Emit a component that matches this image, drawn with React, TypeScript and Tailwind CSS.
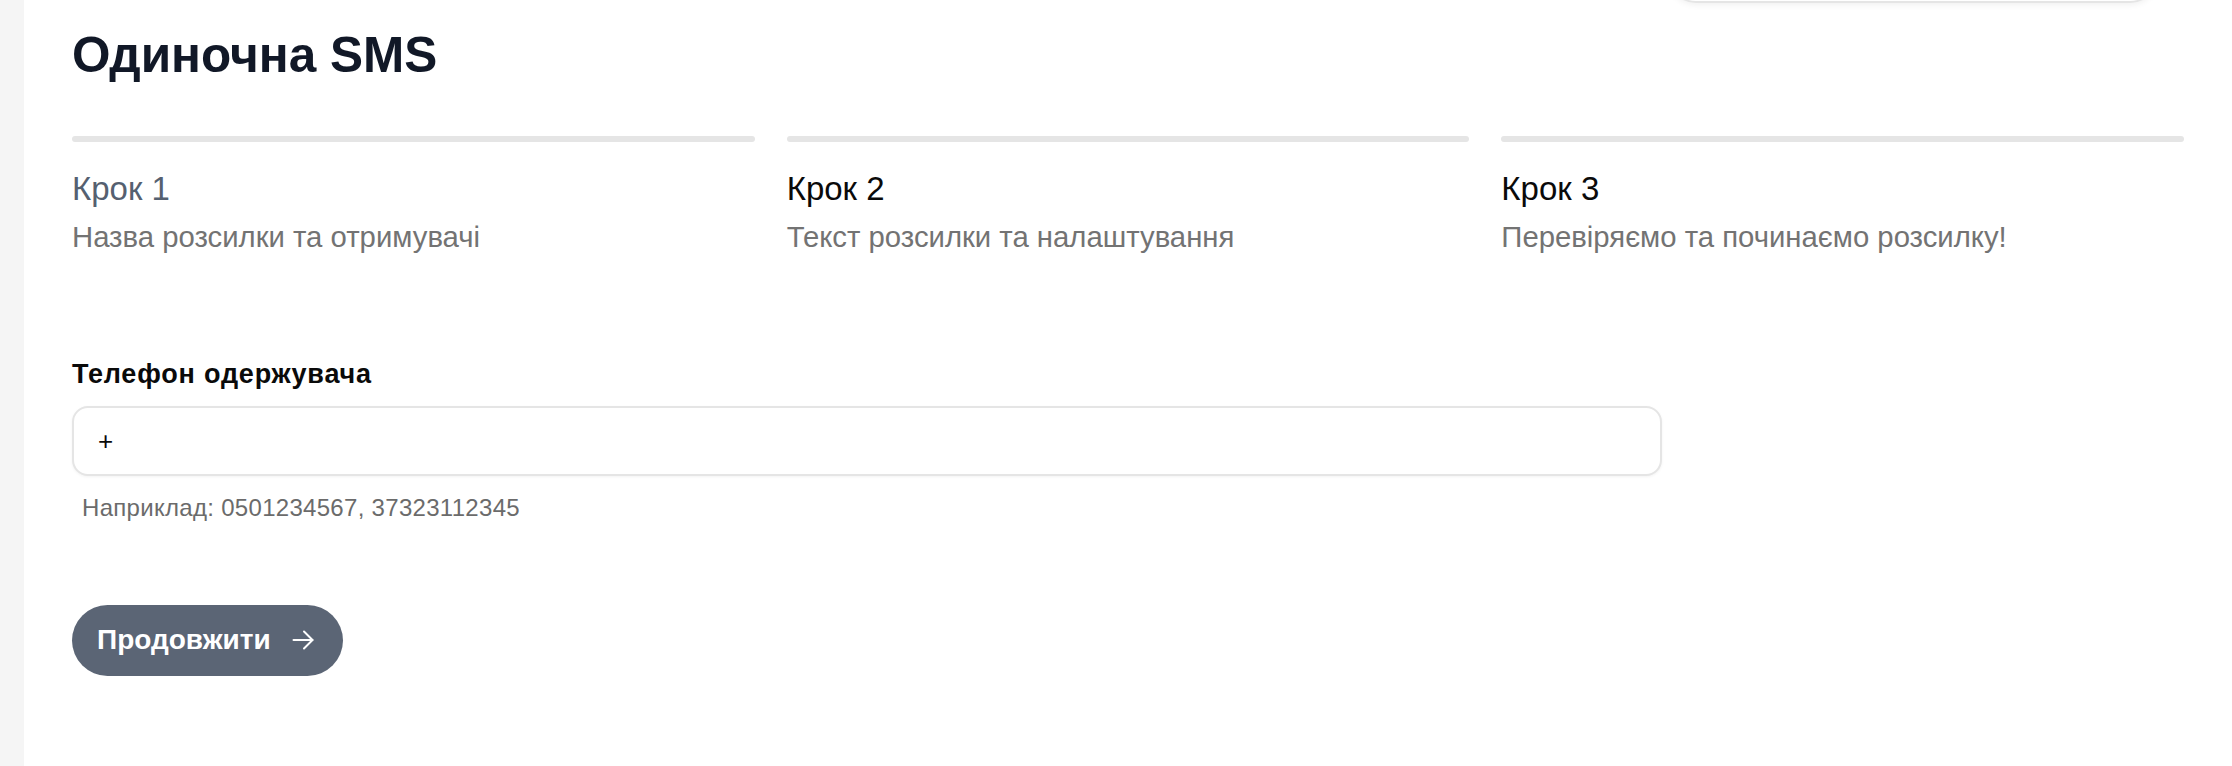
import React from "react";

const font = { fontFamily: '"Liberation Sans", Arial, sans-serif' };

function Step({ n, title, sub, active }: { n: number; title: string; sub: string; active?: boolean }) {
  return (
    <div className="flex flex-col">
      <div className="h-1.5 w-full rounded-full bg-[#e5e5e5]" />
      <div className={`mt-[30px] text-[33px] leading-none ${active ? "text-[#556070]" : "text-[#0a0a0a]"}`}>
        {title} {n}
      </div>
      <div className="mt-[17px] text-[29.3px] leading-none text-[#737373]">{sub}</div>
    </div>
  );
}

export default function App() {
  return (
    <div className="flex min-h-[766px] w-full bg-white overflow-hidden" style={font}>
      <div className="w-6 shrink-0 bg-[#f5f5f5]" />
      <main className="relative flex-1 px-12 pt-[30px]">
        <div className="absolute right-[74px] top-[-60px] h-[63px] w-[490px] rounded-[28px] border-2 border-[#e5e5e5] bg-white shadow-[0_2px_6px_rgba(0,0,0,0.06)]" />
        <h1 className="text-[49.5px] font-bold leading-none text-[#111827]">Одиночна SMS</h1>
        <div className="mt-14 grid grid-cols-3 gap-8">
          <Step n={1} title="Крок" sub="Назва розсилки та отримувачі" active />
          <Step n={2} title="Крок" sub="Текст розсилки та налаштування" />
          <Step n={3} title="Крок" sub="Перевіряємо та починаємо розсилку!" />
        </div>
        <div className="mt-[110px] flex flex-col">
          <label className="text-[27px] font-bold leading-none tracking-[0.8px] text-[#0a0a0a]">Телефон одержувача</label>
          <div className="mt-[18px] flex h-[70px] w-[1590px] items-center rounded-[16px] border-2 border-[#e5e5e5] bg-white pl-6 shadow-[0_1px_3px_rgba(0,0,0,0.05)]">
            <span className="text-[26px] leading-none text-[#0a0a0a]">+</span>
          </div>
          <div className="mt-[20px] pl-[10px] text-[24px] leading-none tracking-[0.3px] text-[#6b6b6b]">
            Наприклад: 0501234567, 37323112345
          </div>
        </div>
        <button className="mt-[85px] flex h-[71px] items-center gap-[21px] rounded-full bg-[#5b6575] pl-[25px] pr-[29px] text-[28px] font-bold text-white">
          <span>Продовжити</span>
          <svg width="22" height="22" viewBox="0 0 22 22" fill="none" stroke="white" strokeWidth="2" strokeLinecap="round" strokeLinejoin="round">
            <path d="M1.5 11h19" />
            <path d="M12 2.5l8.5 8.5-8.5 8.5" />
          </svg>
        </button>
      </main>
    </div>
  );
}
